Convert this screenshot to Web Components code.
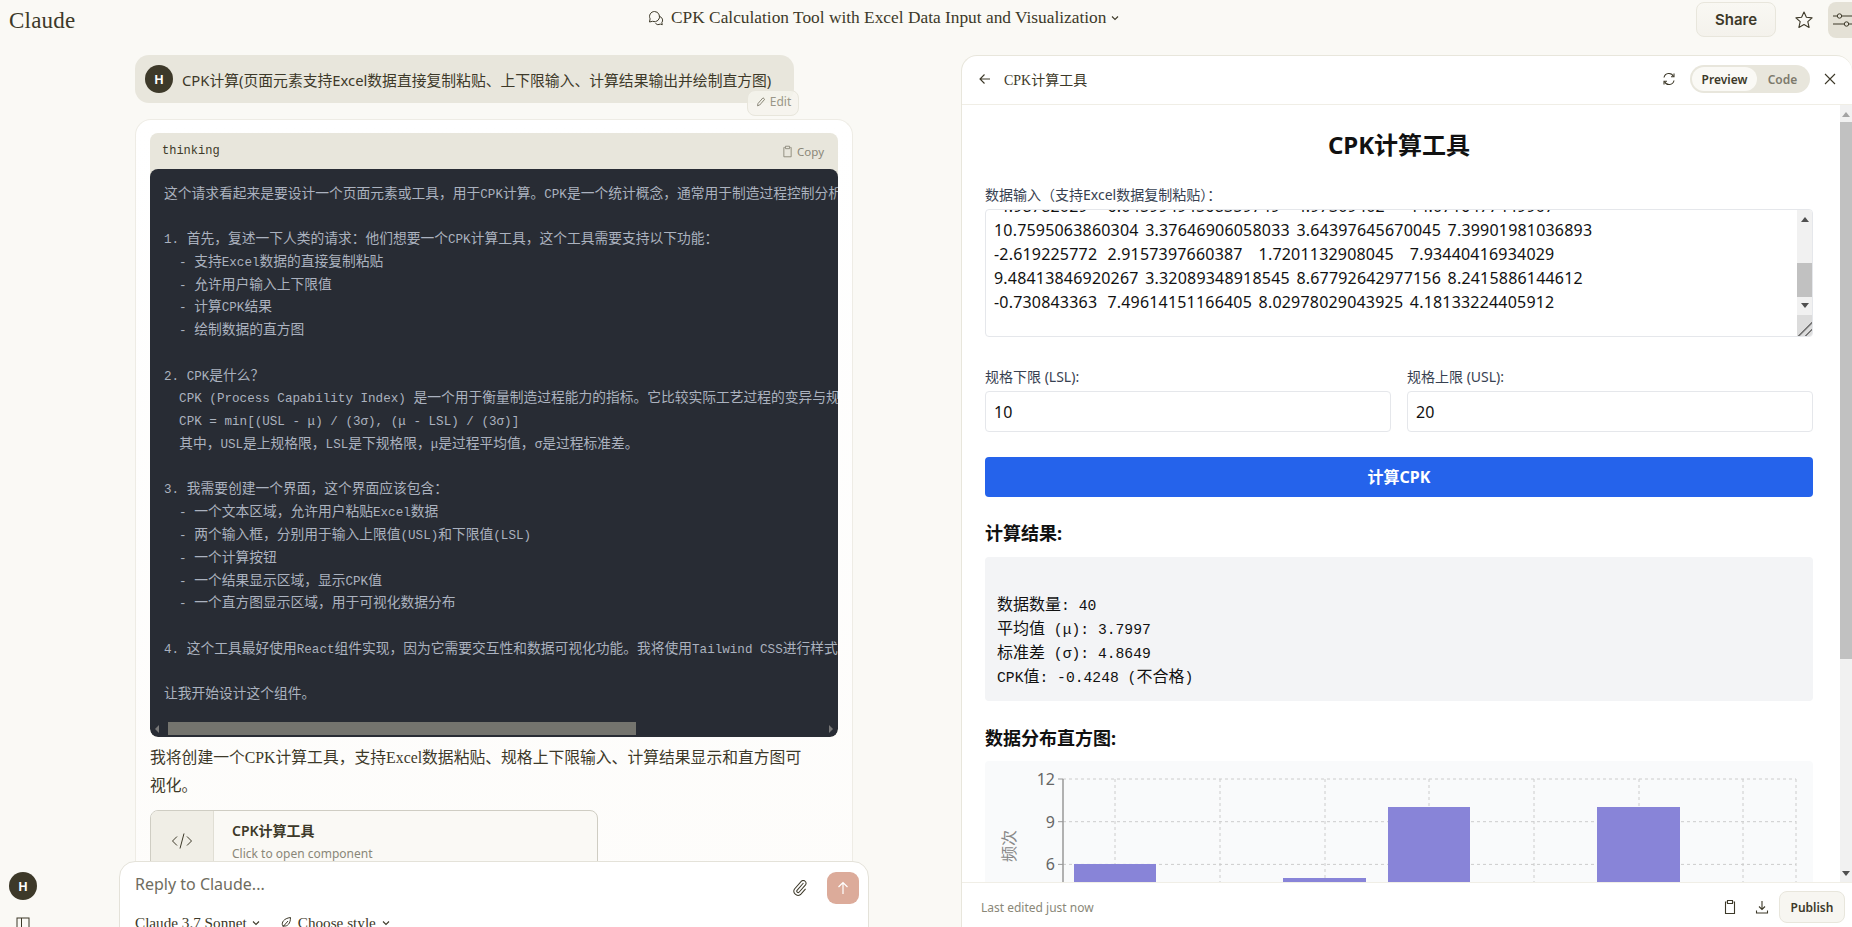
<!DOCTYPE html>
<html lang="zh"><head><meta charset="utf-8"><title>Claude</title>
<style>
html,body{margin:0;padding:0;height:100%;background:#faf9f5;overflow:hidden}
body{font-family:"Noto Sans","Noto Sans CJK SC",sans-serif;color:#3d3929}
</style></head><body>
<claude-app></claude-app>
<script>
const CJK='"Noto Sans CJK SC"';
const esc=s=>s.replace(/&/g,'&amp;').replace(/</g,'&lt;');
const monoWrap=s=>esc(s).replace(/[\x20-\x7eμσ]+/g,m=>`<b>${m}</b>`);
function def(name,css,html,after){
  customElements.define(name,class extends HTMLElement{
    constructor(){super();const r=this.attachShadow({mode:'open'});
      r.innerHTML=`<style>${css}</style>${typeof html==='function'?html(this):html}`;}
    connectedCallback(){ if(after) after(this); }
  });
}
const ic={
 chat:`<svg width="18" height="18" viewBox="0 0 18 18" fill="none" stroke="#3d3929" stroke-width="1"><path d="M7.5 2.5a5 5 0 0 0-4.4 7.3L2.5 13l3-.7a5 5 0 0 0 6.7-6.4A5 5 0 0 0 7.500 2.500z"/><path d="M12.800 7.500a4 4 0 0 1 2 6.200l.5 2-2-.6a4 4 0 0 1-4.800-.6"/></svg>`,
 chev:`<svg width="10" height="10" viewBox="0 0 10 10" fill="none" stroke="currentColor" stroke-width="1.100"><path d="M2 3.500 5 6.500 8 3.500"/></svg>`,
 star:`<svg width="20" height="20" viewBox="0 0 20 20" fill="none" stroke="#3d3929" stroke-width="1.100" stroke-linejoin="round"><path d="M10 2l2.400 5.300 5.700.6-4.300 3.800 1.300 5.700L10 14.500l-5.100 2.900 1.300-5.700L1.900 7.900l5.700-.6z"/></svg>`,
 sliders:`<svg width="20" height="18" viewBox="0 0 20 18" fill="none" stroke="#3d3929" stroke-width="1"><path d="M0 5h4M9 5h11M0 13h11M16 13h4"/><circle cx="6.500" cy="5" r="2.200"/><circle cx="13.500" cy="13" r="2.200"/></svg>`,
 back:`<svg width="16" height="16" viewBox="0 0 16 16" fill="none" stroke="#3d3929" stroke-width="1.100"><path d="M13 8H3M7.500 3.500 3 8l4.500 4.500"/></svg>`,
 refresh:`<svg width="16" height="16" viewBox="0 0 16 16" fill="none" stroke="#3d3929" stroke-width="1.100"><path d="M3 6.500A5 5 0 0 1 12.500 5.500M13 9.500A5 5 0 0 1 3.500 10.500"/><path d="M13 2.500v3.200h-3M3 13.500v-3.200h3"/></svg>`,
 x:`<svg width="16" height="16" viewBox="0 0 16 16" fill="none" stroke="#3d3929" stroke-width="1.100"><path d="M3 3l10 10M13 3 3 13"/></svg>`,
 clip:`<svg width="16" height="16" viewBox="0 0 16 16" fill="none" stroke="currentColor" stroke-width="1.100"><path d="M4.500 3H3.500v11.500h9V3h-1M5.500 1.500h5v3h-5z"/></svg>`,
 dl:`<svg width="16" height="16" viewBox="0 0 16 16" fill="none" stroke="#3d3929" stroke-width="1.100"><path d="M8 2v8.500M5 7.500l3 3 3-3M2.500 11.500v2.500h11v-2.500"/></svg>`,
 pencil:`<svg width="12" height="12" viewBox="0 0 12 12" fill="none" stroke="#8a8778" stroke-width="1"><path d="M2.500 9.800 3 7.500 8 1.800l1.700 1.500-5 5.700z"/></svg>`,
 code:`<svg width="26" height="26" viewBox="0 0 26 26" fill="none" stroke="#3d3929" stroke-width="1"><path d="M8 8.500 3.500 13 8 17.500M18 8.500 22.500 13 18 17.500M15 5.500 11 20.500"/></svg>`,
 paper:`<svg width="18" height="18" viewBox="0 0 18 18" fill="none" stroke="#3d3929" stroke-width="1.100"><path d="M13 3.500 6 11.500a1.500 1.500 0 0 0 2.200 2l7-8a3 3 0 0 0-4.400-4l-7.500 8.500a4.500 4.500 0 0 0 6.500 6l5.500-6.200" transform="translate(-.5 -.2) scale(.92)"/></svg>`,
 up:`<svg width="16" height="16" viewBox="0 0 16 16" fill="none" stroke="#fff" stroke-width="1.200"><path d="M8 14V2.500M3.500 7 8 2.500 12.500 7"/></svg>`,
 feather:`<svg width="14" height="14" viewBox="0 0 14 14" fill="none" stroke="#3d3929" stroke-width="1"><path d="M2 13 9 5M3.500 9.500c-1-3 1-7 8-8 0 6-3 9-6.500 8.500z"/></svg>`,
 side:`<svg width="14" height="14" viewBox="0 0 14 14" fill="none" stroke="#3d3929" stroke-width="1"><rect x="1" y="1" width="12" height="12"/><path d="M5.500 1v12"/></svg>`
};

def('user-avatar',`:host{display:flex;width:28px;height:28px;border-radius:50%;background:#3d3929;color:#fff;align-items:center;justify-content:center;font:700 12px Inter,"Noto Sans",sans-serif;flex:none}`,`H`);

def('top-bar',`
:host{display:grid;grid-template-columns:647px auto 1fr;height:42px;flex:none;align-items:start;background:#faf9f5}
.logo{font:23px/42px "Liberation Serif",serif;color:#3d3929;padding-left:9px;letter-spacing:.2px}
.t{display:flex;align-items:center;height:36px;font:17.350px "Liberation Serif",${CJK},serif;color:#3d3929;white-space:nowrap}
.t svg:first-child{margin-right:6px}.t svg:last-child{margin-left:4px}
.r{display:flex;justify-content:flex-end;align-items:center;height:37px;padding-top:1px}
.share{width:80px;height:35px;box-sizing:border-box;border:1px solid #e8e6dc;border-radius:8px;background:linear-gradient(#f9f8f3,#f4f2ec);display:flex;align-items:center;justify-content:center;font:600 15px Inter,sans-serif;color:#3d3929;margin-right:18px}
.star{display:flex;margin-right:14px}
.ctl{width:24px;height:36px;background:#e4e1d6;border-radius:8px 0 0 8px;display:flex;align-items:center;justify-content:flex-end;overflow:hidden}
`,`<div class="logo">Claude</div>
<div class="t">${ic.chat}<span>CPK Calculation Tool with Excel Data Input and Visualization</span>${ic.chev}</div>
<div class="r"><div class="share">Share</div><div class="star">${ic.star}</div><div class="ctl"><div style="display:flex;margin-right:-1px">${ic.sliders}</div></div></div>`);

def('user-bubble',`
:host{display:flex;position:relative;width:659px;height:48px;box-sizing:border-box;background:#e8e6dc;border-radius:14px;align-items:center;padding-left:10px;gap:9px;flex:none}
.txt{font:14.800px "Noto Sans",${CJK},sans-serif;color:#3d3929;white-space:nowrap}
.edit{position:absolute;left:612px;top:35px;width:52px;height:26px;box-sizing:border-box;border:1px solid #e8e6dc;border-radius:8px;background:rgba(245,243,236,.85);display:flex;align-items:center;justify-content:center;gap:3px;font:12px/20px "Noto Sans",sans-serif;color:#9a9788;padding-bottom:2px}
`,`<user-avatar></user-avatar><span class="txt">CPK计算(页面元素支持Excel数据直接复制粘贴、上下限输入、计算结果输出并绘制直方图)</span><div class="edit">${ic.pencil}Edit</div>`);

const thinking=[
"这个请求看起来是要设计一个页面元素或工具，用于CPK计算。CPK是一个统计概念，通常用于制造过程控制分析，","",
"1. 首先，复述一下人类的请求：他们想要一个CPK计算工具，这个工具需要支持以下功能：",
"  - 支持Excel数据的直接复制粘贴","  - 允许用户输入上下限值","  - 计算CPK结果","  - 绘制数据的直方图","",
"2. CPK是什么？",
"  CPK (Process Capability Index) 是一个用于衡量制造过程能力的指标。它比较实际工艺过程的变异与规格限",
"  CPK = min[(USL - μ) / (3σ), (μ - LSL) / (3σ)]",
"  其中，USL是上规格限，LSL是下规格限，μ是过程平均值，σ是过程标准差。","",
"3. 我需要创建一个界面，这个界面应该包含：",
"  - 一个文本区域，允许用户粘贴Excel数据","  - 两个输入框，分别用于输入上限值(USL)和下限值(LSL)","  - 一个计算按钮","  - 一个结果显示区域，显示CPK值","  - 一个直方图显示区域，用于可视化数据分布","",
"4. 这个工具最好使用React组件实现，因为它需要交互性和数据可视化功能。我将使用Tailwind CSS进行样式设计。","",
"让我开始设计这个组件。"].join("\n");

def('code-block',`
:host{display:flex;flex-direction:column;width:688px;height:604px;flex:none;border-radius:8px;overflow:hidden;background:#e8e6dc}
.h{height:36px;flex:none;display:flex;align-items:center;justify-content:space-between;padding:0 14px 0 12px;font:12px "Liberation Mono",monospace;color:#3d3929}
.c{display:flex;align-items:center;gap:3px;font:11.500px "Noto Sans",sans-serif;color:#8a8778}
.d{flex:1;background:#282c34;border-radius:8px;display:flex;flex-direction:column;overflow:hidden;min-height:0}
pre{flex:1;margin:0;padding:11.500px 14px 0;overflow:hidden;font:13.750px/22.770px ${CJK},monospace;color:#abb2bf;white-space:pre}
pre b{font:400 12.600px/1 "Liberation Mono",monospace}
.s{height:15px;flex:none;display:flex;align-items:center;padding:0 5px 2px;gap:5px;box-sizing:border-box}
.s i{flex:none;width:0;height:0;border:4px solid transparent}
.s .l{border-right-color:#777;border-left:0}.s .rr{border-left-color:#777;border-right:0}
.th{width:468px;height:13px;background:#74746e;flex:none;margin-left:4px}.sp{flex:1}
`,`<div class="h"><span>thinking</span><span class="c">${ic.clip.replace('width="16" height="16"','width="13" height="13"')}Copy</span></div>
<div class="d"><pre>${monoWrap(thinking)}</pre><div class="s"><i class="l"></i><div class="th"></div><div class="sp"></div><i class="rr"></i></div></div>`);

def('artifact-card',`
:host{display:flex;width:448px;height:120px;box-sizing:border-box;border:1px solid #cfcdc3;border-radius:8px;background:#faf9f5;overflow:hidden;flex:none}
.i{width:63px;flex:none;background:#f0eee6;border-right:1px solid #e0ded4;display:flex;justify-content:center;padding-top:17px;box-sizing:border-box;align-items:flex-start}
.b{padding:9px 0 0 18px}
.t{font:600 14px/22px "Noto Sans",${CJK},sans-serif;color:#3d3929}
.s{font:12px/18px "Noto Sans",sans-serif;color:#8a8778;margin-top:3px}
`,`<div class="i">${ic.code}</div><div class="b"><div class="t">CPK计算工具</div><div class="s">Click to open component</div></div>`);

def('chat-pane',`
:host{display:flex;flex-direction:column;width:961px;padding:13px 0 0 135px;box-sizing:border-box;flex:none;overflow:hidden;height:100%}
.card{margin-top:16px;width:718px;flex:1;min-height:0;box-sizing:border-box;background:#fff;border:1px solid #eeece5;border-bottom:0;border-radius:16px 16px 0 0;padding:13px 14px 0;display:flex;flex-direction:column;overflow:hidden;background:linear-gradient(#fff,#fdfcfa)}
p{margin:7px 0 10px;width:660px;font:15.800px/28px "Liberation Serif",${CJK},serif;color:#3d3929}
`,`<user-bubble></user-bubble><div class="card"><code-block></code-block><p>我将创建一个CPK计算工具，支持Excel数据粘贴、规格上下限输入、计算结果显示和直方图可视化。</p><artifact-card></artifact-card></div>`);

def('reply-box',`
:host{position:absolute;left:119px;top:861px;width:750px;height:120px;box-sizing:border-box;background:#fff;border:1px solid #e4e2d9;border-radius:16px;display:block;padding:12px 9px 0 15px}
.a{display:flex;justify-content:space-between;align-items:flex-start}
.p{font:16px/21px "Noto Sans",sans-serif;color:#6f6d60}
.ac{display:flex;align-items:center;gap:17px}
.send{width:32px;height:32px;background:#dcab9a;border-radius:9px;display:flex;align-items:center;justify-content:center;margin-top:-2px}
.pp{display:flex}
.m{display:flex;align-items:center;margin-top:9px;font:15.200px/20px "Liberation Serif",serif;color:#3d3929;gap:4px}
.m .st{margin-left:14px;display:flex;align-items:center;gap:5px}
`,`<div class="a"><span class="p">Reply to Claude...</span><div class="ac"><span class="pp">${ic.paper}</span><div class="send">${ic.up}</div></div></div>
<div class="m"><span>Claude 3.7 Sonnet</span>${ic.chev}<span class="st">${ic.feather}<span>Choose style</span>${ic.chev}</span></div>`);

def('left-rail',`
:host{position:absolute;left:9px;top:872px;display:flex;flex-direction:column;align-items:center;gap:17px;width:28px}
`,`<user-avatar></user-avatar><span style="display:flex">${ic.side}</span>`);

def('data-box',`
:host{display:flex;height:128px;flex:none;box-sizing:border-box;border:1px solid #e5e7eb;border-radius:4px;overflow:hidden;background:#fff}
pre{flex:1;margin:-16px 0 0;padding:0 0 0 8px;font:16px/24px "Noto Sans",sans-serif;letter-spacing:.19px;tab-size:37.800px;color:#111;overflow:hidden}
.s{width:15px;flex:none;background:#f1f1f1;display:flex;flex-direction:column;align-items:center;position:relative}
.u,.dn{width:0;height:0;border:4px solid transparent;flex:none}
.u{border-bottom:5px solid #505050;border-top:0;margin-top:7px}
.dn{border-top:5px solid #505050;border-bottom:0;margin-top:6px}
.th{width:100%;height:34px;background:#c1c1c1;margin-top:41px;flex:none}
.cn{width:100%;flex:1;margin-top:7px;background:#dcdcdc linear-gradient(135deg,transparent 60%,#777 61%,#777 66%,transparent 67%,transparent 78%,#777 79%,#777 84%,transparent 85%)}
`,`<pre>-4.98782029\t6.04599494568359749\t4.97309402\t14.0716477449907
10.7595063860304\t3.37646906058033\t3.64397645670045\t7.39901981036893
-2.619225772\t2.9157397660387\t1.7201132908045\t7.93440416934029
9.48413846920267\t3.32089348918545\t8.67792642977156\t8.2415886144612
-0.730843363\t7.49614151166405\t8.02978029043925\t4.18133224405912</pre>
<div class="s"><i class="u"></i><div class="th"></div><i class="dn"></i><div class="cn"></div></div>`);

def('num-field',`
:host{display:block;flex:1}
label{display:block;font:14px/20px "Noto Sans",${CJK},sans-serif;color:#374151;margin-bottom:4px}
.i{height:41px;box-sizing:border-box;border:1px solid #e5e7eb;border-radius:4px;padding:0 8px;display:flex;align-items:center;font:16px "Noto Sans",sans-serif;color:#111}
`,h=>`<label>${h.getAttribute('label')}</label><div class="i">${h.getAttribute('value')}</div>`);

def('cpk-histogram',`
:host{display:block;height:320px;background:#f9fafb;border-radius:4px;flex:none}
svg{display:block}
text{font:16px "Noto Sans",${CJK},sans-serif;fill:#666}
`,()=>{
 const hy=[18,60.700,103.400,146,189,232,275];
 const vx=[130,235,340,444,549,654,758,811];
 const dash=`stroke="#ccc" stroke-dasharray="3 3"`;
 const bars=[[89,103,82],[298,117,83],[403,46,82],[612,46,83]];
 return `<svg width="828" height="320" viewBox="0 0 828 320">
 ${hy.map(y=>`<line x1="78" x2="811" y1="${y}" y2="${y}" ${dash}/>`).join('')}
 ${vx.map(x=>`<line x1="${x}" x2="${x}" y1="18" y2="320" ${dash}/>`).join('')}
 ${bars.map(b=>`<rect x="${b[0]}" y="${b[1]}" width="${b[2]}" height="${320-b[1]}" fill="#8884d8"/>`).join('')}
 <line x1="78" x2="78" y1="18" y2="320" stroke="#999" stroke-width="1.500"/>
 ${[[18,'12'],[60.700,'9'],[103.400,'6']].map(t=>`<line x1="73" x2="78" y1="${t[0]}" y2="${t[0]}" stroke="#999"/><text x="70" y="${t[0]+6}" text-anchor="end">${t[1]}</text>`).join('')}
 <text transform="translate(30 85) rotate(-90)" text-anchor="middle" style="fill:#888">频次</text>
 </svg>`;
});

def('cpk-tool',`
:host{display:flex;flex-direction:column;flex:1;min-width:0;padding:24px 27px 0 23px;overflow:hidden;font-family:"Noto Sans",${CJK},sans-serif}
h1{margin:0 0 24px;font:700 24px/32px "Noto Sans",${CJK},sans-serif;color:#111;text-align:center;flex:none}
h2{margin:23px 0 9px;font:700 18px/28px "Noto Sans",${CJK},sans-serif;color:#111;flex:none}
.l{font:14px/20px "Noto Sans",${CJK},sans-serif;color:#374151;margin-bottom:4px;flex:none}
.row{display:flex;gap:16px;margin-top:30px;flex:none}
.btn{margin-top:25px;height:40px;box-sizing:border-box;padding-bottom:2px;background:#2563eb;border-radius:4px;color:#fff;display:flex;align-items:center;justify-content:center;font:700 16px "Noto Sans",${CJK},sans-serif;flex:none}
pre{margin:1px 0 0;padding:9.500px 12px 14.500px;background:#f3f4f6;border-radius:4px;font:16px/24px ${CJK},monospace;color:#111;flex:none}
pre b{font:400 14.700px/1 "Liberation Mono",monospace}
`,`<h1>CPK计算工具</h1><div class="l">数据输入（支持Excel数据复制粘贴）：</div><data-box></data-box>
<div class="row"><num-field label="规格下限 (LSL):" value="10"></num-field><num-field label="规格上限 (USL):" value="20"></num-field></div>
<div class="btn">计算CPK</div><h2 style="margin-top:22px">计算结果:</h2>
<pre>${monoWrap("\n\n数据数量: 40\n平均值 (μ): 3.7997\n标准差 (σ): 4.8649\nCPK值: -0.4248 (不合格)")}</pre>
<h2>数据分布直方图:</h2><cpk-histogram></cpk-histogram>`);

def('page-scroll',`
:host{display:flex;flex-direction:column;align-items:center;width:12px;flex:none;background:#f1f1f1}
.u{border:4px solid transparent;border-bottom:5px solid #a3a3a3;border-top:0;margin-top:7px;flex:none}
.th{width:100%;height:537px;background:#c1c1c1;margin-top:5px;flex:none}.sp{flex:1}
.dn{border:4px solid transparent;border-top:5px solid #505050;border-bottom:0;margin-bottom:6px;flex:none}
`,`<i class="u"></i><div class="th"></div><div class="sp"></div><i class="dn"></i>`);

def('artifact-panel',`
:host{display:flex;flex-direction:column;width:891px;flex:none;margin-top:13px;box-sizing:border-box;background:#fff;border:1px solid #e8e6dc;border-right:0;border-bottom:0;border-radius:16px 16px 0 0;overflow:hidden;min-height:0}
.h{height:49px;flex:none;box-sizing:border-box;display:flex;align-items:center;border-bottom:1px solid #f0eee6;padding:0 14px 2px 15px}
.h .tt{font:14px "Liberation Serif",${CJK},serif;color:#3d3929;margin-left:11px;flex:1}
.tg{width:120px;height:28px;box-sizing:border-box;background:#e8e6dc;border-radius:14px;padding:2px;display:flex;align-items:center;font:600 12px "Noto Sans",sans-serif;margin:0 12px 0 13px}
.tg .on{width:65px;height:24px;border-radius:12px;background:#faf9f5;display:flex;align-items:center;justify-content:center;color:#3d3929}
.tg .off{flex:1;text-align:center;color:#7d7a6c}
.m{flex:1;display:flex;min-height:0;overflow:hidden}
.f{height:45px;flex:none;box-sizing:border-box;border-top:1px solid #f0eee6;display:flex;align-items:center;padding:4px 7px 0 19px;background:#fff}
.f .le{flex:1;font:12px "Noto Sans",sans-serif;color:#8a8778}
.f .ic{display:flex;color:#3d3929;margin-right:16px}
.pub{width:66px;height:32px;box-sizing:border-box;border:1px solid #e8e6dc;border-radius:8px;background:#f7f6f1;display:flex;align-items:center;justify-content:center;font:600 12px "Noto Sans",sans-serif;color:#3d3929}
`,`<div class="h"><span style="display:flex">${ic.back}</span><span class="tt">CPK计算工具</span><span style="display:flex">${ic.refresh}</span>
<div class="tg"><div class="on">Preview</div><div class="off">Code</div></div><span style="display:flex">${ic.x}</span></div>
<div class="m"><cpk-tool></cpk-tool><page-scroll></page-scroll></div>
<div class="f"><span class="le">Last edited just now</span><span class="ic">${ic.clip}</span><span class="ic" style="margin-right:9px">${ic.dl}</span><div class="pub">Publish</div></div>`);

def('claude-app',`
:host{display:flex;flex-direction:column;height:927px;width:1852px;position:relative;overflow:hidden}
.b{flex:1;display:flex;min-height:0}
`,`<top-bar></top-bar><div class="b"><chat-pane></chat-pane><artifact-panel></artifact-panel></div><reply-box></reply-box><left-rail></left-rail>`);
</script>
</body></html>
